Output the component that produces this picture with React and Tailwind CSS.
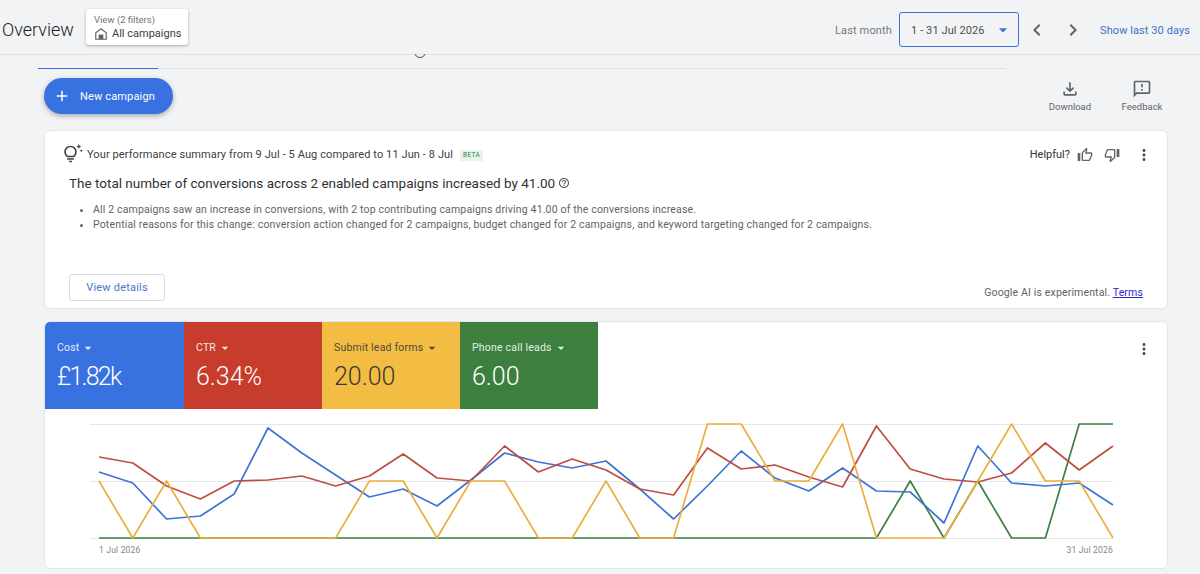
import {
  MdAdd,
  MdArrowDropDown,
  MdChevronLeft,
  MdChevronRight,
  MdMoreVert,
  MdOutlineFeedback,
  MdOutlineFileDownload,
  MdOutlineHelpOutline,
  MdOutlineThumbDownOffAlt,
  MdOutlineThumbUpOffAlt,
  MdOutlineTipsAndUpdates,
} from 'react-icons/md';

const FONT = { fontFamily: 'Roboto, "Liberation Sans", sans-serif' };

const tiles = [
  { label: 'Cost', value: '£1.82k', cls: 'w-[139px] bg-[#3871e0] text-white', labelCls: 'text-[#e3ebfb]', valueCls: 'tracking-[-1.8px]' },
  { label: 'CTR', value: '6.34%', cls: 'w-[138px] bg-[#c73d2d] text-white', labelCls: 'text-[#f8e3e0]', valueCls: '' },
  { label: 'Submit lead forms', value: '20.00', cls: 'w-[138px] bg-[#f2bd42] text-[#3c3a30]', labelCls: 'text-[#4f4a35]', valueCls: '' },
  { label: 'Phone call leads', value: '6.00', cls: 'w-[138px] bg-[#3d7f3f] text-white', labelCls: 'text-[#e2efe2]', valueCls: '' },
];

const blue = [472, 483, 519, 516, 494, 428, 453, 475, 497, 489, 506, 480, 453, 462, 468, 461, 489, 519, 486, 451, 478, 491, 468, 491, 492, 523, 446, 483, 486, 483, 505];
const red = [457, 463, 486, 499, 481, 480, 476, 486, 476, 454, 478, 481, 446, 472, 459, 470, 489, 495, 448, 469, 465, 477, 487, 426, 469, 479, 482, 473, 443, 470, 446];
const yellow = [481, 538, 481, 538, 538, 538, 538, 538, 481, 481, 538, 481, 481, 538, 538, 481, 538, 538, 424, 424, 481, 481, 424, 538, 538, 538, 481, 424, 481, 481, 538];
const green = [538, 538, 538, 538, 538, 538, 538, 538, 538, 538, 538, 538, 538, 538, 538, 538, 538, 538, 538, 538, 538, 538, 538, 538, 481, 538, 481, 538, 538, 424, 424];

const toPoints = (ys) => ys.map((y, i) => `${(99 + i * 33.8).toFixed(1)},${y}`).join(' ');

function Chart() {
  return (
    <svg viewBox="45 410 1122 132" className="block w-full h-[132px] mt-[1px]">
      <g stroke="#e4e6e8" strokeWidth="1">
        <line x1="90" x2="1113" y1="424.5" y2="424.5" />
        <line x1="90" x2="1113" y1="481.5" y2="481.5" />
        <line x1="90" x2="1113" y1="538.5" y2="538.5" />
      </g>
      <g fill="none" strokeWidth="1.7" strokeLinejoin="round">
        <polyline points={toPoints(green)} stroke="#3d7f3f" />
        <polyline points={toPoints(blue)} stroke="#3f74d6" />
        <polyline points={toPoints(red)} stroke="#bd4f3f" />
        <polyline points={toPoints(yellow)} stroke="#ecae3f" />
      </g>
    </svg>
  );
}

export default function App() {
  return (
    <div className="h-[574px] overflow-hidden bg-[#f1f3f5] text-[#3c4043]" style={FONT}>
      <header className="h-[55px] flex items-center border-b border-[#dfe1e4] pl-[2px] pr-[10px]">
        <h1 className="text-[18px] font-light text-[#202124] w-[84px] mt-[4px]">Overview</h1>
        <div className="w-[102px] h-[36px] bg-white rounded-[3px] shadow-[0_1px_3px_rgba(60,64,67,0.4)] pl-[8px] pt-[5px]">
          <div className="text-[9.5px] leading-[11px] text-[#70757a]">View (2 filters)</div>
          <div className="flex items-center gap-[4px] mt-[2px] text-[11px] leading-[14px] text-[#3c4043]">
            <svg viewBox="0 0 24 24" className="w-[14px] h-[14px]" fill="none" stroke="#5f6368" strokeWidth="2">
              <path d="M3 21V10l9-7 9 7v11z" />
              <rect x="8" y="13" width="8" height="8" fill="#5f6368" stroke="none" />
            </svg>
            All campaigns
          </div>
        </div>
        <div className="ml-auto flex items-center mt-[4px]">
          <span className="text-[11px] tracking-[0.15px] text-[#74787d] mr-[7px] pt-[4px] ml-[2px]">Last month</span>
          <div className="w-[120px] h-[35px] border-[1.5px] border-[#3b73dc] rounded-[3px] flex items-center pl-[11px] pr-[5px] text-[11px] tracking-[0.1px] text-[#4a4e52]">
            <span className="pt-[4px]">1 - 31 Jul 2026</span>
            <MdArrowDropDown className="ml-auto mt-[1px] text-[#3b73dc]" size={20} />
          </div>
          <MdChevronLeft className="ml-[6px] mt-[2px] text-[#5f6368]" size={24} />
          <MdChevronRight className="ml-[12px] mt-[2px] text-[#5f6368]" size={24} />
          <span className="ml-[15px] text-[11px] tracking-[0.08px] text-[#3f6fc9] pt-[4px]">Show last 30 days</span>
        </div>
      </header>

      <div className="ml-[38px] w-[968px] h-[14px] border-b border-[#dfe1e4] relative">
        <div className="absolute left-0 bottom-[-1px] w-[120px] h-[1.5px] bg-[#3b73dc]" />
        <div className="absolute left-[376px] top-[-1px] w-[12px] h-[4px] overflow-hidden">
          <div className="w-[12px] h-[12px] -mt-[8px] rounded-full border border-[#4a4e52]" />
        </div>
      </div>

      <div className="mt-[9px] pl-[44px] pr-[32px]">
        <div className="flex items-start justify-between h-[52px]">
          <button type="button" className="w-[129px] h-[36px] rounded-full bg-[#3871e0] text-white text-[11px] tracking-[0.15px] flex items-center pl-[9px] gap-[9px] shadow-[0_2px_5px_rgba(60,64,67,0.4)]">
            <MdAdd size={18} />
            <span className="pt-[3px]">New campaign</span>
          </button>
          <div className="flex pt-[1px]">
            <div className="w-[52px] flex flex-col items-center text-[#5f6368]">
              <MdOutlineFileDownload size={20} />
              <span className="text-[9.5px] leading-[12px] mt-[2px] text-[#5f6368]">Download</span>
            </div>
            <div className="ml-[20px] w-[52px] flex flex-col items-center text-[#5f6368]">
              <MdOutlineFeedback size={20} />
              <span className="text-[9.5px] leading-[12px] mt-[2px] text-[#5f6368]">Feedback</span>
            </div>
          </div>
        </div>

        <section className="h-[179px] bg-white rounded-[6px] border border-[#e4e6e9] pl-[18px] pr-[14px] pt-[14px] flex flex-col">
          <div className="flex items-center h-[20px]">
            <MdOutlineTipsAndUpdates size={20} className="text-[#3c4043] -mt-[2px]" />
            <span className="ml-[4px] text-[11px] tracking-[0.1px] text-[#3c4043]">Your performance summary from 9 Jul - 5 Aug compared to 11 Jun - 8 Jul</span>
            <span className="ml-[7px] px-[3px] h-[11px] leading-[11px] bg-[#e6f3ea] text-[6.5px] tracking-[0.3px] text-[#3d7f3f]">BETA</span>
            <span className="ml-auto text-[11px] text-[#2f3134]">Helpful?</span>
            <MdOutlineThumbUpOffAlt size={16} className="ml-[7px] -mt-[1px] text-[#5f6368]" />
            <MdOutlineThumbDownOffAlt size={16} className="ml-[11px] -mt-[1px] text-[#5f6368]" />
            <MdMoreVert size={18} className="ml-[15px] -mt-[1px] text-[#4a4e52]" />
          </div>
          <div className="mt-[8px] pl-[6px] flex items-center text-[13.5px] leading-[20px] text-[#2f3134]">
            The total number of conversions across 2 enabled campaigns increased by 41.00
            <MdOutlineHelpOutline size={12} className="ml-[3px] text-[#4a4e52]" />
          </div>
          <ul className="mt-[9px] ml-[30px] list-disc text-[10.5px] tracking-[0.16px] leading-[15px] text-[#5f6368]">
            <li>All 2 campaigns saw an increase in conversions, with 2 top contributing campaigns driving 41.00 of the conversions increase.</li>
            <li>Potential reasons for this change: conversion action changed for 2 campaigns, budget changed for 2 campaigns, and keyword targeting changed for 2 campaigns.</li>
          </ul>
          <div className="mt-auto mb-[7px] flex items-end justify-between">
            <button type="button" className="ml-[6px] w-[96px] h-[27px] pt-[1px] border border-[#dadce0] rounded-[3px] text-[11px] tracking-[0.2px] text-[#4a76cc]">View details</button>
            <span className="text-[10.5px] tracking-[0.15px] mr-[10px] text-[#5f6368]">
              Google AI is experimental. <span className="underline text-[#2a2acb]">Terms</span>
            </span>
          </div>
        </section>

        <section className="mt-[12px] h-[248px] bg-white rounded-[6px] border border-[#e4e6e9] overflow-hidden">
          <div className="flex h-[87px]">
            {tiles.map((t) => (
              <div key={t.label} className={`pl-[12px] pt-[18px] ${t.cls}`}>
                <div className={`flex items-center text-[10.5px] tracking-[0.2px] leading-[16px] ${t.labelCls}`}>
                  {t.label}
                  <MdArrowDropDown size={16} className="ml-[1px]" />
                </div>
                <div className={`text-[25px] font-light leading-[30px] mt-[6px] ${t.valueCls}`}>{t.value}</div>
              </div>
            ))}
            <div className="ml-auto pr-[14px] pt-[18px]">
              <MdMoreVert size={18} className="text-[#4a4e52]" />
            </div>
          </div>
          <Chart />
          <div className="flex justify-between mt-[2px] pl-[54px] pr-[54px] text-[8.5px] tracking-[0.2px] leading-[12px] text-[#80868b]">
            <span>1 Jul 2026</span>
            <span>31 Jul 2026</span>
          </div>
        </section>
      </div>
    </div>
  );
}
